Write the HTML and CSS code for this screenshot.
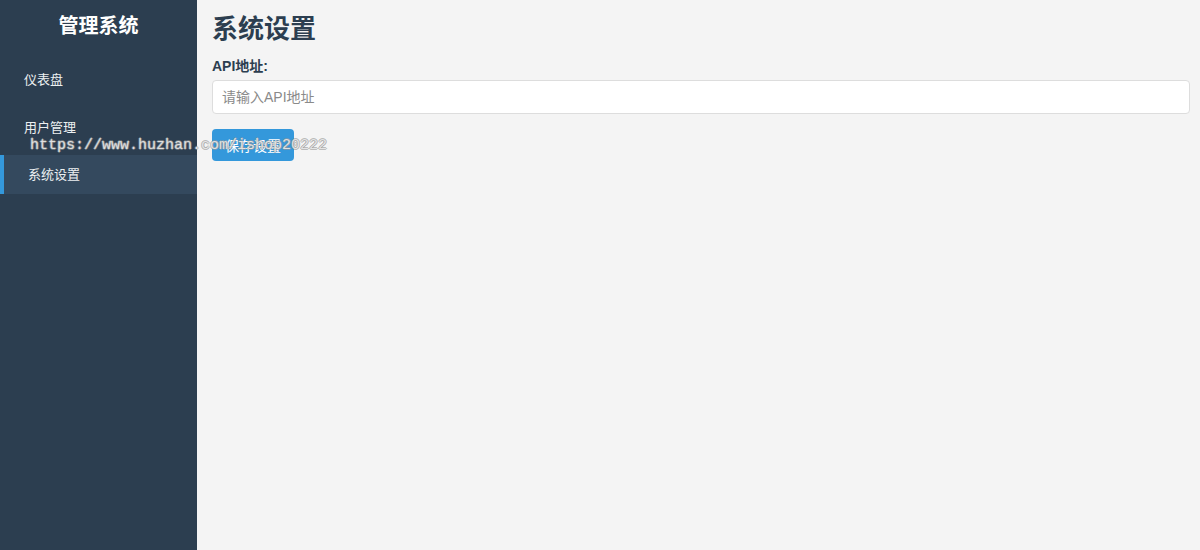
FILE: index.html
```html
<!DOCTYPE html>
<html lang="zh-CN">
<head>
<meta charset="utf-8">
<title>管理系统</title>
<link rel="stylesheet" href="styles.css">
</head>
<body>
<div class="layout">
  <aside class="sidebar">
    <div class="brand">管理系统</div>
    <ul class="menu">
      <li class="menu-item">仪表盘</li>
      <li class="menu-item">用户管理</li>
      <li class="menu-item active">系统设置</li>
    </ul>
  </aside>
  <main class="main">
    <h1 class="page-title">系统设置</h1>
    <form class="settings-form">
      <label class="field-label" for="api">API地址:</label>
      <input class="field-input" id="api" type="text" placeholder="请输入API地址">
      <button class="btn-primary" type="button">保存设置</button>
    </form>
  </main>
</div>
<div class="watermark">https://www.huzhan.com/ishop20222</div>
</body>
</html>
```
FILE: styles.css
```css
* { box-sizing: border-box; }
html, body { margin: 0; padding: 0; height: 100%; }
body {
  font-family: "Liberation Sans", "Noto Sans CJK SC", sans-serif;
  background: #f4f4f4;
  color: #2c3e50;
}
.layout {
  display: flex;
  height: 100%;
}
.sidebar {
  width: 197px;
  flex-shrink: 0;
  background: #2c3e50;
  color: #ecf0f1;
}
.brand {
  padding: 16px 0 12px;
  line-height: 20px;
  font-size: 20px;
  font-weight: bold;
  text-align: center;
  color: #fff;
  margin-bottom: 13px;
}
.menu {
  list-style: none;
  margin: 0;
  padding: 0;
  display: flex;
  flex-direction: column;
  gap: 8px;
}
.menu-item {
  height: 39px;
  display: flex;
  align-items: center;
  padding: 0 24px;
  font-size: 13px;
  line-height: 16px;
  color: #ecf0f1;
}
.menu-item:first-child { padding-bottom: 2px; }
.menu-item.active {
  background: #34495e;
  border-left: 4px solid #3498db;
}
.main {
  flex: 1;
  padding: 15px 10px 15px 15px;
}
.page-title {
  margin: 0;
  font-size: 26px;
  line-height: 28px;
  font-weight: bold;
  color: #2c3e50;
}
.settings-form {
  display: flex;
  flex-direction: column;
  align-items: flex-start;
  margin-top: 15px;
}
.field-label {
  font-size: 14px;
  line-height: 17px;
  font-weight: bold;
  color: #2c3e50;
  margin-bottom: 5px;
}
.field-input {
  width: 100%;
  height: 34px;
  border: 1px solid #ddd;
  border-radius: 4px;
  background: #fff;
  padding: 0 9px;
  font-family: inherit;
  font-size: 14px;
  color: #333;
  outline: none;
}
.field-input::placeholder { color: #8a8a8a; }
.btn-primary {
  margin-top: 15px;
  height: 32px;
  padding: 0 13px;
  border: none;
  border-radius: 4px;
  background: #3498db;
  color: #fff;
  font-family: inherit;
  font-size: 14px;
}
.watermark {
  position: absolute;
  left: 30px;
  top: 137px;
  font-family: "Liberation Mono", monospace;
  font-size: 15px;
  line-height: 18px;
  color: rgba(240, 240, 240, 0.85);
  text-shadow: 1px 0 0 rgba(150,150,150,0.6), -1px 0 0 rgba(150,150,150,0.6), 0 1px 0 rgba(150,150,150,0.6), 0 -1px 0 rgba(150,150,150,0.6);
  pointer-events: none;
}
```
